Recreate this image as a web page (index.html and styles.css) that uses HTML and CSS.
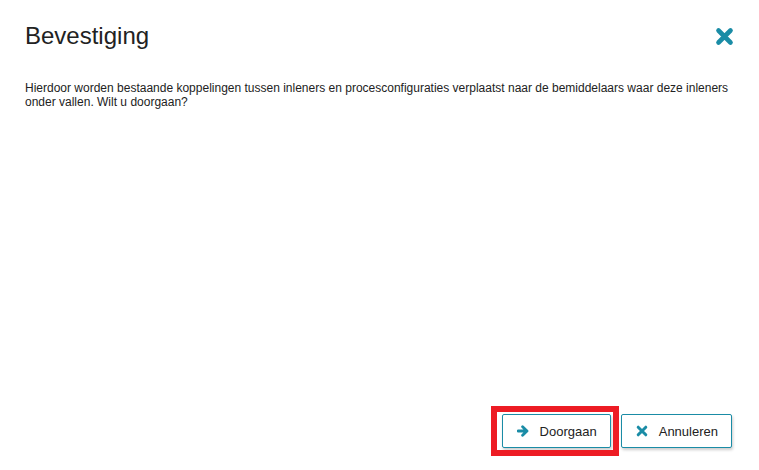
FILE: index.html
```html
<!DOCTYPE html>
<html lang="nl">
<head>
    <meta charset="UTF-8">
    <title>Bevestiging</title>
    <link rel="stylesheet" href="styles.css">
</head>
<body>

<div class="dialog">
    <div class="dialog-header">
        <h1>Bevestiging</h1>
        <button class="close-btn" aria-label="Sluiten">
            <svg width="19" height="19" viewBox="0 0 19 19"><path d="M3.5 3.5 L15.5 15.5 M15.5 3.5 L3.5 15.5" stroke="#1a8ca6" stroke-width="4.6" stroke-linecap="round"/></svg>
        </button>
    </div>

    <div class="dialog-body">
        <p>Hierdoor worden bestaande koppelingen tussen inleners en procesconfiguraties verplaatst naar de bemiddelaars waar deze inleners onder vallen. Wilt u doorgaan?</p>
    </div>

    <!-- Actions -->
    <div class="dialog-footer">
        <span class="highlight">
            <button class="btn">
                <svg width="12" height="12" viewBox="0 0 12 12"><path d="M1 6 H9.5 M5.6 1.8 L10 6 L5.6 10.2" fill="none" stroke="#1a8ca6" stroke-width="2.8" stroke-linecap="round" stroke-linejoin="round"/></svg>
                Doorgaan
            </button>
        </span>
        <button class="btn">
            <svg width="12" height="12" viewBox="0 0 12 12"><path d="M2.2 2.2 L9.8 9.8 M9.8 2.2 L2.2 9.8" stroke="#1a8ca6" stroke-width="3" stroke-linecap="round"/></svg>
            Annuleren
        </button>
    </div>
</div>

</body>
</html>
```

FILE: styles.css
```css
html, body {
    margin: 0;
    height: 100%;
}
body {
    font-family: "Liberation Sans", Arial, sans-serif;
    color: #222;
    background: #fff;
}
.dialog {
    height: 470px;
    box-sizing: border-box;
    padding: 22px 25px 22px 25px;
    display: flex;
    flex-direction: column;
}
.dialog-header {
    display: flex;
    justify-content: space-between;
    align-items: center;
    height: 28px;
}
.dialog-header h1 {
    margin: 0;
    font-size: 24px;
    font-weight: normal;
    line-height: 28px;
}
.close-btn {
    border: none;
    background: none;
    padding: 0;
    width: 19px;
    height: 19px;
    cursor: pointer;
}
.close-btn svg {
    display: block;
}
.dialog-body {
    flex: 1;
    padding-top: 31px;
}
.dialog-body p {
    margin: 0;
    font-size: 12px;
    line-height: 14px;
}
.dialog-footer {
    display: flex;
    justify-content: flex-end;
    gap: 10px;
    margin-right: 2px;
}
.highlight {
    position: relative;
    display: flex;
}
.highlight::after {
    content: "";
    position: absolute;
    left: -11px;
    top: -8px;
    right: -8px;
    bottom: -8px;
    border: 6px solid #ed1c24;
    pointer-events: none;
}
.btn {
    display: flex;
    align-items: center;
    gap: 11px;
    height: 34px;
    padding: 0 13px 0 14px;
    font-family: "Liberation Sans", Arial, sans-serif;
    font-size: 13px;
    color: #222;
    background: #fff;
    border: 1px solid #1a8ca6;
    border-radius: 2px;
    box-shadow: 1px 2px 3px rgba(0, 0, 0, 0.2);
    cursor: pointer;
}
.btn svg {
    display: block;
}
```
